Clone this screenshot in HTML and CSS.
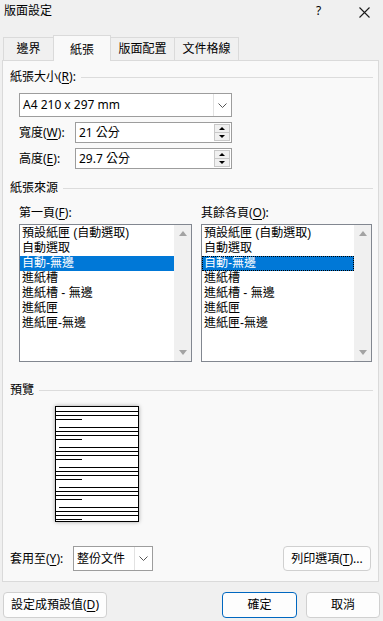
FILE: index.html
```html
<!DOCTYPE html>
<html lang="zh-Hant">
<head>
  <meta charset="UTF-8" />
  <meta name="viewport" content="width=device-width, initial-scale=1.0" />
  <title>版面設定</title>
  <link rel="stylesheet" href="styles.css">
</head>
<body>
  <div class="titlebar">
    <span class="title">版面設定</span>
    <span class="help">?</span>
    <span class="close">
      <svg width="11" height="11" viewBox="0 0 11 11"><path d="M0.5 0.5 L10.5 10.5 M10.5 0.5 L0.5 10.5" stroke="#1a1a1a" stroke-width="1.1" fill="none"/></svg>
    </span>
  </div>

  <div class="tabs">
    <div class="tab tab-1">邊界</div>
    <div class="tab tab-2 active">紙張</div>
    <div class="tab tab-3">版面配置</div>
    <div class="tab tab-4">文件格線</div>
  </div>

  <div class="panel">
    <div class="group-title"><span>紙張大小(<u>R</u>):</span></div>
    <div class="indent">
      <div class="combo combo-size">
        <span class="combo-text">A4 210 x 297 mm</span>
        <span class="combo-btn"><svg width="9" height="5" viewBox="0 0 9 5"><path d="M0.5 0.5 L4.5 4.5 L8.5 0.5" stroke="#555" fill="none"/></svg></span>
      </div>
      <div class="field-row">
        <span class="field-label">寬度(<u>W</u>):</span>
        <div class="spin">
          <span class="spin-text">21 公分</span>
          <span class="spin-btns">
            <span class="spin-up"></span>
            <span class="spin-down"></span>
          </span>
        </div>
      </div>
      <div class="field-row">
        <span class="field-label">高度(<u>E</u>):</span>
        <div class="spin">
          <span class="spin-text">29.7 公分</span>
          <span class="spin-btns">
            <span class="spin-up"></span>
            <span class="spin-down"></span>
          </span>
        </div>
      </div>
    </div>

    <div class="group-title group-source"><span>紙張來源</span></div>
    <div class="indent columns">
      <div class="col col-left">
        <div class="list-label">第一頁(<u>F</u>):</div>
        <div class="listbox">
          <ul class="items">
            <li>預設紙匣 (自動選取)</li>
            <li>自動選取</li>
            <li class="selected">自動-無邊</li>
            <li>進紙槽</li>
            <li>進紙槽 - 無邊</li>
            <li>進紙匣</li>
            <li>進紙匣-無邊</li>
          </ul>
          <div class="scrollbar"><span class="arrow-up"></span><span class="arrow-down"></span></div>
        </div>
      </div>
      <div class="col col-right">
        <div class="list-label">其餘各頁(<u>O</u>):</div>
        <div class="listbox">
          <ul class="items">
            <li>預設紙匣 (自動選取)</li>
            <li>自動選取</li>
            <li class="selected focused">自動-無邊</li>
            <li>進紙槽</li>
            <li>進紙槽 - 無邊</li>
            <li>進紙匣</li>
            <li>進紙匣-無邊</li>
          </ul>
          <div class="scrollbar"><span class="arrow-up"></span><span class="arrow-down"></span></div>
        </div>
      </div>
    </div>

    <div class="group-title group-preview"><span>預覽</span></div>
    <div class="preview">
      <svg width="84" height="116" viewBox="0 0 84 116">
        <rect x="0.5" y="0.5" width="83" height="115" fill="#fff" stroke="#000"/>
        <g stroke="#000" stroke-width="1">
          <path d="M1 5.5 H83 M1 9.5 H83 M1 13.5 H27 M4 21.5 H83"/>
          <path d="M1 25.5 H83 M1 29.5 H83 M1 33.5 H27 M4 41.5 H83"/>
          <path d="M1 45.5 H83 M1 49.5 H83 M1 53.5 H27 M4 61.5 H83"/>
          <path d="M1 65.5 H83 M1 69.5 H83 M1 73.5 H27 M4 81.5 H83"/>
          <path d="M1 85.5 H83 M1 89.5 H83 M1 93.5 H27 M4 101.5 H83"/>
          <path d="M1 105.5 H83 M1 109.5 H83 M1 113.5 H27"/>
        </g>
      </svg>
    </div>

    <div class="apply-row">
      <span class="apply-label">套用至(<u>Y</u>):</span>
      <div class="combo combo-apply">
        <span class="combo-text">整份文件</span>
        <span class="combo-btn"><svg width="9" height="5" viewBox="0 0 9 5"><path d="M0.5 0.5 L4.5 4.5 L8.5 0.5" stroke="#555" fill="none"/></svg></span>
      </div>
      <button class="btn btn-print">列印選項(<u>T</u>)...</button>
    </div>
  </div>

  <div class="footer">
    <button class="btn btn-default">設定成預設值(<u>D</u>)</button>
    <button class="btn btn-ok">確定</button>
    <button class="btn btn-cancel">取消</button>
  </div>
</body>
</html>
```

FILE: styles.css
```css
* {
  box-sizing: border-box;
}
body {
  margin: 0;
  width: 383px;
  height: 621px;
  background: #f0f0f0;
  font-family: "Noto Sans", "Noto Sans CJK TC", sans-serif;
  font-size: 12px;
  line-height: 16px;
  color: #000;
  overflow: hidden;
}
u {
  text-decoration-thickness: 1px;
  text-underline-offset: 2px;
}

/* title bar */
.titlebar {
  height: 35px;
  display: flex;
  align-items: flex-start;
  padding-top: 3px;
}
.title {
  padding-left: 4px;
  flex: 1;
}
.help {
  width: 45px;
  text-align: left;
  padding-left: 2px;
}
.close {
  width: 24px;
  padding-top: 3px;
}

/* tabs */
.tabs {
  display: flex;
  align-items: flex-end;
  height: 25px;
  padding-left: 3px;
}
.tab {
  height: 23px;
  border: 1px solid #dadada;
  border-bottom: none;
  background: #f0f0f0;
  text-align: center;
  line-height: 22px;
  margin-left: -1px;
}
.tab-1 {
  width: 51px;
  margin-left: 0;
}
.tab-2 {
  width: 58px;
}
.tab-3 {
  width: 65px;
}
.tab-4 {
  width: 65px;
}
.tab.active {
  height: 26px;
  line-height: 27px;
  background: #f9f9f9;
  margin-bottom: -1px;
  position: relative;
  z-index: 1;
}

/* panel */
.panel {
  margin-left: 2px;
  width: 377px;
  height: 522px;
  border: 1px solid #dadada;
  background: #f9f9f9;
  padding: 8px 5px 0 7px;
}
.group-title {
  display: flex;
  align-items: center;
  gap: 5px;
  white-space: nowrap;
}
.group-title::after {
  content: "";
  flex: 1;
  height: 1px;
  background: #dcdcdc;
}
.indent {
  margin-left: 9px;
}

/* combo box */
.combo {
  display: flex;
  border: 1px solid #9d9d9d;
  background: #fff;
}
.combo-size {
  width: 213px;
  height: 24px;
  margin-top: 8px;
}
.combo-text {
  flex: 1;
  padding-left: 3px;
  line-height: 22px;
}
.combo-btn {
  width: 18px;
  border-left: 1px solid #e2e2e2;
  display: flex;
  align-items: center;
  justify-content: center;
}

/* spin fields */
.field-row {
  display: flex;
  align-items: center;
  margin-top: 5px;
}
.field-label {
  width: 56px;
}
.spin {
  width: 157px;
  height: 21px;
  display: flex;
  border: 1px solid #9d9d9d;
  background: #fff;
}
.spin-text {
  flex: 1;
  padding-left: 3px;
  line-height: 19px;
}
.spin-btns {
  width: 17px;
  display: flex;
  flex-direction: column;
  padding: 1px 1px 1px 0;
}
.spin-up,
.spin-down {
  flex: 1;
  background: #f0f0f0;
  border: 1px solid #c8c8c8;
  display: flex;
  align-items: center;
  justify-content: center;
}
.spin-down {
  margin-top: -1px;
}
.spin-up::before {
  content: "";
  border-left: 3px solid transparent;
  border-right: 3px solid transparent;
  border-bottom: 3px solid #000;
}
.spin-down::before {
  content: "";
  border-left: 3px solid transparent;
  border-right: 3px solid transparent;
  border-top: 3px solid #000;
}

/* paper source */
.group-source {
  margin-top: 11px;
}
.columns {
  display: flex;
  gap: 9px;
}
.col-left {
  width: 173px;
}
.col-right {
  width: 171px;
}
.list-label {
  margin-top: 9px;
}
.listbox {
  margin-top: 3px;
  height: 138px;
  border: 1px solid #828790;
  background: #fff;
  display: flex;
}
.items {
  list-style: none;
  margin: 0;
  padding: 1px 0 0;
  flex: 1;
  font-family: "Liberation Sans", "Noto Sans CJK TC", sans-serif;
}
.items li {
  height: 15px;
  line-height: 15px;
  padding-left: 2px;
  white-space: nowrap;
}
.items li.selected {
  background: #0078d7;
  color: #fff;
}
.items li.focused {
  outline: 1px dotted #000;
  outline-offset: -1px;
}
.scrollbar {
  width: 17px;
  background: #f0f0f0;
  display: flex;
  flex-direction: column;
  justify-content: space-between;
  align-items: center;
  padding: 6px 0;
}
.arrow-up {
  border-left: 4px solid transparent;
  border-right: 4px solid transparent;
  border-bottom: 5px solid #a3a3a3;
}
.arrow-down {
  border-left: 4px solid transparent;
  border-right: 4px solid transparent;
  border-top: 5px solid #a3a3a3;
}

/* preview */
.group-preview {
  margin-top: 20px;
}
.preview {
  margin-top: 8px;
  margin-left: 45px;
  width: 84px;
  height: 116px;
  box-shadow: 0 0 4px rgba(0, 0, 0, 0.35);
}
.preview svg {
  display: block;
}

/* apply row */
.apply-row {
  display: flex;
  align-items: center;
  margin-top: 24px;
  padding-right: 2px;
}
.apply-label {
  width: 63px;
}
.combo-apply {
  width: 80px;
  height: 25px;
}
.combo-apply .combo-text {
  line-height: 23px;
}
.btn {
  height: 25px;
  border: 1px solid #d0d0d0;
  border-radius: 4px;
  background: #fdfdfd;
  font-family: inherit;
  font-size: 12px;
  color: #000;
  padding: 0;
  line-height: 16px;
}
.btn-print {
  width: 88px;
  margin-left: auto;
}

/* footer */
.footer {
  display: flex;
  margin-top: 10px;
  padding: 0 3px;
}
.footer .btn {
  height: 26px;
}
.btn-default {
  width: 104px;
}
.btn-ok {
  width: 75px;
  margin-left: auto;
  border-color: #0067c0;
}
.btn-cancel {
  width: 74px;
  margin-left: 9px;
}
```
